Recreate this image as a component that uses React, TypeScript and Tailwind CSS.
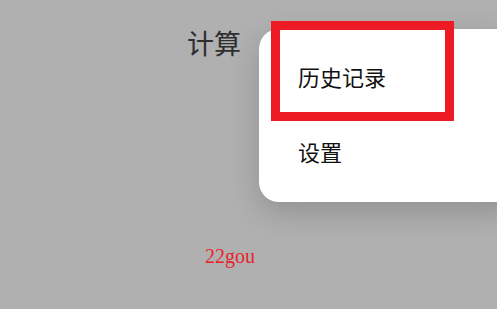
import React from "react";

const cjk = "font-['Noto_Sans_CJK_SC','Noto_Sans',sans-serif]";

export default function App() {
  return (
    <div className={`relative h-[309px] w-[497px] overflow-hidden bg-[#b0b0b0] ${cjk}`}>
      {/* page behind the menu */}
      <div className="flex flex-col pl-[187px] pt-[23px]">
        <h1 className="text-[27px] leading-[40px] text-[#2e2e2e]">计算</h1>
        <p className="mt-[181px] pl-[18px] font-['Liberation_Serif',serif] text-[20px] leading-[24px] text-[#e8232a]">
          22gou
        </p>
      </div>

      {/* popup menu */}
      <div className="absolute left-[259px] top-[29px] h-[173px] w-[260px] rounded-[20px] bg-white pl-[39px] pt-[31px] shadow-[0_10px_30px_rgba(0,0,0,0.18)]">
        <ul className="flex flex-col gap-[43px] text-[22px] leading-[32px] text-[#111]">
          <li>历史记录</li>
          <li>设置</li>
        </ul>
      </div>

      {/* highlight frame */}
      <div className="absolute left-[271px] top-[21px] h-[100px] w-[183px] border-[9px] border-[#ed1c24]" />
    </div>
  );
}
